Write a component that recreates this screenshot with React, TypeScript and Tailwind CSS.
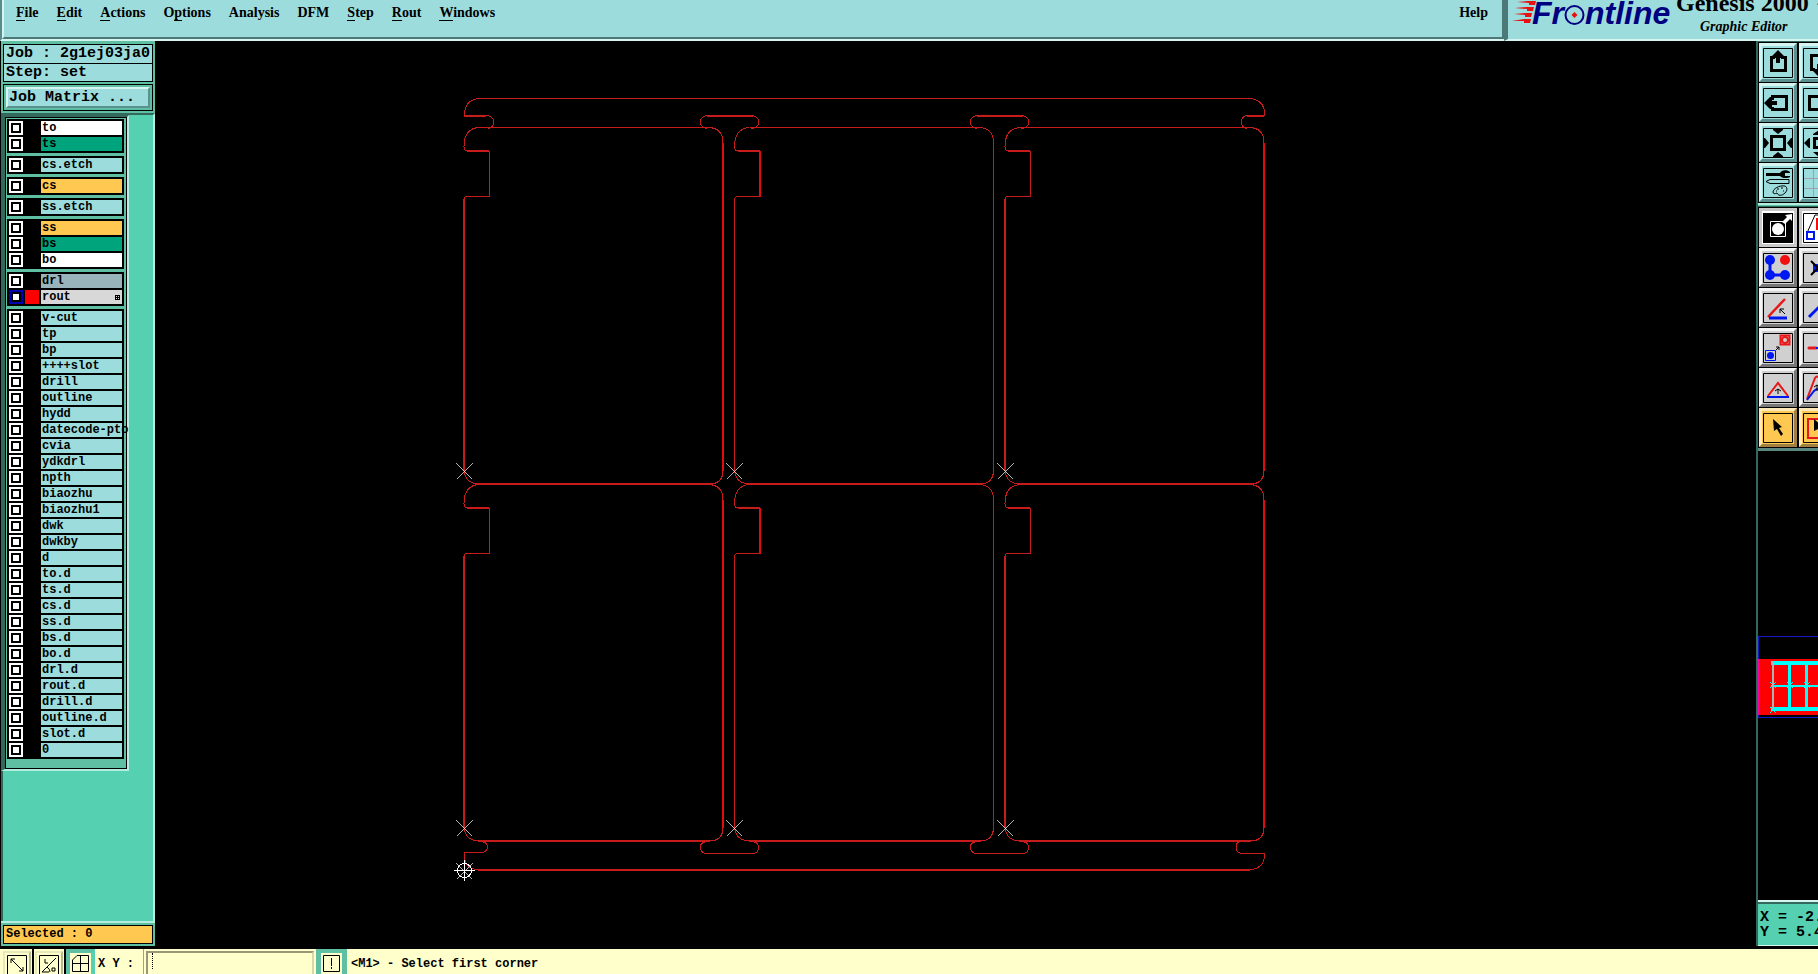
import type { ReactNode } from "react";
import clsx from "clsx";

type LayerTone = "white" | "green" | "aqua" | "gold" | "slate" | "gray";

interface Layer {
  name: string;
  tone: LayerTone;
  active?: boolean;
}

const TONE_CLASS: Record<LayerTone, string> = {
  white: "bg-white",
  green: "bg-[#00a47c]",
  aqua: "bg-[#9cdcdc]",
  gold: "bg-[#ffc850]",
  slate: "bg-[#9ab4bc]",
  gray: "bg-[#d8d8d8]",
};

const aqua = (...names: string[]): Layer[] =>
  names.map((name) => ({ name, tone: "aqua" }));

const LAYER_GROUPS: Layer[][] = [
  [
    { name: "to", tone: "white" },
    { name: "ts", tone: "green" },
  ],
  aqua("cs.etch"),
  [{ name: "cs", tone: "gold" }],
  aqua("ss.etch"),
  [
    { name: "ss", tone: "gold" },
    { name: "bs", tone: "green" },
    { name: "bo", tone: "white" },
  ],
  [
    { name: "drl", tone: "slate" },
    { name: "rout", tone: "gray", active: true },
  ],
  aqua(
    "v-cut", "tp", "bp", "++++slot", "drill", "outline", "hydd",
    "datecode-pto", "cvia", "ydkdrl", "npth", "biaozhu", "biaozhu1",
    "dwk", "dwkby", "d", "to.d", "ts.d", "cs.d", "ss.d", "bs.d", "bo.d",
    "drl.d", "rout.d", "drill.d", "outline.d", "slot.d", "0",
  ),
];

// [label, index of the underlined letter]
const MENUS: [string, number][] = [
  ["File", 0],
  ["Edit", 0],
  ["Actions", 0],
  ["Options", 1],
  ["Analysis", -1],
  ["DFM", -1],
  ["Step", 0],
  ["Rout", 0],
  ["Windows", 0],
];

function MenuItem({ label, mark }: { label: string; mark: number }) {
  return (
    <button type="button" className="cursor-pointer">
      {mark < 0 ? (
        label
      ) : (
        <>
          {label.slice(0, mark)}
          <span className="border-b border-black">{label[mark]}</span>
          {label.slice(mark + 1)}
        </>
      )}
    </button>
  );
}

function Header() {
  return (
    <header className="flex h-[41px] shrink-0 overflow-hidden bg-[#9cdcdc] font-['Liberation_Serif',serif] font-bold">
      <div className="flex min-w-0 flex-1 border-b-2 border-l-2 border-b-[#d6f4f0] border-l-[#5a8c8c]">
        <nav className="flex flex-1 items-start gap-[18px] border-r-2 border-b-2 border-l-2 border-r-[#4c7878] border-b-[#4c7878] border-l-[#d6f4f0] pr-[14px] pl-3 text-sm leading-[18px] pt-1">
          {MENUS.map(([label, mark]) => (
            <MenuItem key={label} label={label} mark={mark} />
          ))}
          <button type="button" className="ml-auto cursor-pointer">
            Help
          </button>
        </nav>
      </div>
      <div className="flex w-[314px] shrink-0 border-b-2 border-l-4 border-b-[#d6f4f0] border-l-[#4c7878]">
        <div className="flex w-[168px] shrink-0 items-start pl-1 font-['Liberation_Sans',sans-serif] text-[32px] leading-[26px] text-[#000080] italic">
          <svg className="-mr-1 h-6 w-6 shrink-0" viewBox="0 0 24 24">
            <path
              fill="#e81010"
              d="m5 2 11-1h8l-1 4h-6v-2ZM3 8l11-1h8l-1 4h-6v-2ZM2 14l11-1h7l-1 4h-6v-2ZM0 21l12-2h7l-1 4h-6v-2Z"
            />
          </svg>
          <span>Fr</span>
          <svg className="mt-[5px] h-5 w-[21px] shrink-0" viewBox="0 0 20 20">
            <circle cx="10" cy="10" r="9" fill="none" stroke="#000080" strokeWidth="2" />
            <path fill="#e81010" d="m10 7 3 3-3 3-3-3Z" />
          </svg>
          <span>ntline</span>
        </div>
        <div className="-mt-[11px] flex flex-1 flex-col whitespace-nowrap">
          <span className="text-2xl leading-[28px]">Genesis 2000 ™</span>
          <span className="pl-6 text-sm leading-5 italic">
            Graphic Editor
          </span>
        </div>
      </div>
    </header>
  );
}

function LayerRow({ layer }: { layer: Layer }) {
  return (
    <label className="flex h-[14px] gap-[2px]">
      <input
        type="checkbox"
        defaultChecked={layer.active}
        className={clsx(
          "h-[14px] w-[14px] shrink-0 appearance-none border-2 bg-white shadow-[inset_0_0_0_2px_#000]",
          layer.active ? "border-[#0000b0]" : "border-white",
        )}
      />
      <span
        className={clsx("w-[14px] shrink-0", layer.active ? "bg-[#ff0000]" : "bg-black")}
      />
      <span
        className={clsx(
          "flex w-[81px] items-center pl-px text-xs leading-[14px] whitespace-nowrap",
          TONE_CLASS[layer.tone],
        )}
      >
        {layer.name}
        {layer.active && (
          <svg className="mr-[2px] ml-auto h-[5px] w-[5px]" viewBox="0 0 5 5" shapeRendering="crispEdges">
            <path d="M.5.5h4v4h-4ZM2.5 0v5M0 2.5h5" fill="none" stroke="#000" />
          </svg>
        )}
      </span>
    </label>
  );
}

function Sidebar() {
  return (
    <aside className="mb-[2px] ml-px flex w-[154px] shrink-0 flex-col bg-[#5fbfa3] text-black">
      <div className="m-[2px] mt-[3px] border border-black bg-[#9cdcdc] text-[15px]">
        <div className="h-[19px] border-b border-black pl-[2px] leading-[18px] whitespace-nowrap">
          Job : 2g1ej03ja0
        </div>
        <div className="h-[17px] pl-[2px] leading-[18px]">Step: set</div>
      </div>
      <div className="mx-[2px] mb-[2px] border border-black p-[2px]">
        <button
          type="button"
          className="block h-[21px] w-full cursor-pointer border-2 border-t-[#d6f4f0] border-r-[#5a9090] border-b-[#5a9090] border-l-[#d6f4f0] bg-[#9cdcdc] pl-px text-left text-[15px] leading-[18px]"
        >
          Job Matrix ...
        </button>
      </div>
      <div className="flex flex-1 flex-col border-t-2 border-r-2 border-b-2 border-t-[#33695c] border-r-[#b5eee0] border-b-[#b5eee0] bg-[#55d0b0]">
        <div className="w-[128px] border-t-2 border-r-2 border-b-2 border-l-4 border-t-[#33695c] border-r-[#b5eee0] border-b-[#b5eee0] border-l-[#33695c]">
          <div className="flex flex-col gap-[3px] border border-black bg-[#5fbfa3] p-px pb-[9px]">
            {LAYER_GROUPS.map((group) => (
              <div key={group[0].name} className="flex w-[117px] flex-col gap-[2px] bg-black p-[2px]">
                {group.map((layer) => (
                  <LayerRow key={layer.name} layer={layer} />
                ))}
              </div>
            ))}
          </div>
        </div>
        <div className="w-[2px] flex-1 bg-[#33695c]" />
      </div>
      <div className="m-[2px] h-[19px] border border-black bg-[#ffc850] pl-[2px] text-xs leading-[17px]">
        Selected : 0
      </div>
    </aside>
  );
}

const RED = "#c81c1c";
const BRIGHT = "#e00c10";

const COLUMNS = [
  { x: 464, left: 2, notch: 1, right: 2 },
  { x: 734.5, left: 1, notch: 2, right: 1 },
  { x: 1005, left: 2, notch: 1, right: 2 },
];
const ROWS = [127.5, 484.5];

function Board({ x, y, left, notch, right }: { x: number; y: number; left: number; notch: number; right: number }) {
  const r = x + 259;
  const b = y + 356.5;
  return (
    <g>
      <path
        d={`M${x + 15} ${y}H${r - 14}Q${r} ${y + 1} ${r} ${y + 15}M${r} ${b - 14}Q${r} ${b} ${r - 14} ${b}M${x + 14} ${b}Q${x + 1} ${b - 1} ${x} ${b - 14}M${x + 3} ${y + 69}Q${x} ${y + 69} ${x} ${y + 72}M${x + 3} ${y + 23.5}Q${x} ${y + 23} ${x} ${y + 19}Q${x} ${y + 1} ${x + 15} ${y}M${x + 25} ${y + 69}H${x + 3}`}
      />
      <path d={`M${x} ${y + 71}V${b - 13}`} strokeWidth={left} />
      <path d={`M${x + 3} ${y + 23.5}H${x + 25}`} strokeWidth={2} />
      <path
        d={`M${x + 25} ${y + 23.5}V${y + 69}`}
        strokeWidth={notch}
        stroke={notch > 1 ? BRIGHT : RED}
      />
      <path d={`M${r} ${y + 15}V${b - 13}`} strokeWidth={right} stroke={BRIGHT} />
      <path d={`M${x + 14} ${b}H${r - 13}`} strokeWidth={2} />
    </g>
  );
}

function Canvas() {
  return (
    <main className="min-w-0 flex-1">
      <svg className="h-full w-full" viewBox="155 41 1601 907" shapeRendering="crispEdges">
        <g fill="none" stroke={RED}>
          {/* top rail */}
          <path d="M488 128.5Q493.5 128 493.5 122Q493.5 116 486 115.5H464.5V113Q466 99 480 98.5H1250Q1264 100 1264.5 113V115.5H1247Q1241.5 116 1241.5 122Q1241.5 128 1247 128.5" />
          <path d="M464 116H486M1247 116H1264" strokeWidth="2" />
          {/* bottom rail */}
          <path d="M483 842Q487.5 843 487.5 847Q487.5 852 481 852.5H464.5V858Q466 869 479 870M1250 870Q1264 868 1264.5 856V853.5H1242Q1236 853 1236 847Q1236 842 1241 841" />
          <path d="M478 870H1250" strokeWidth="2" />
          {[700.5, 970.5].map((x) => (
            <g key={x}>
              <path d={`M${x + 7} 128.5Q${x} 128 ${x} 122Q${x} 116 ${x + 7} 115.5M${x + 51} 115.5Q${x + 58} 116 ${x + 58} 122Q${x + 58} 128 ${x + 51} 128.5`} />
              <path d={`M${x + 6} 116H${x + 52}`} strokeWidth="2" />
              <path d={`M${x + 7} 841.5Q${x} 842 ${x} 847Q${x} 853 ${x + 6} 853.5H${x + 53}Q${x + 58} 853 ${x + 58} 847Q${x + 58} 842 ${x + 51} 841.5`} />
            </g>
          ))}
          {ROWS.map((y) =>
            COLUMNS.map((col) => <Board key={`${col.x}-${y}`} y={y} {...col} />),
          )}
        </g>
        <g fill="none" stroke="#fff">
          {[470.5, 827.5].map((y) =>
            [464.5, 734.5, 1005.5].map((x) => (
              <path
                key={`${x}-${y}`}
                d={`M${x - 8} ${y - 8}l16 16m0 -16l-16 16`}
                strokeWidth="0.7"
              />
            )),
          )}
          <path d="M456.500 862.500l16 16m0-16l-16 16" strokeWidth="0.7" />
          <path d="M464.5 860v21M454 870.5h21" />
          <circle cx="464.5" cy="870.5" r="7" />
        </g>
      </svg>
    </main>
  );
}

type ToolTone = "aqua" | "white" | "gray" | "gold";

const TOOL_CLASS: Record<ToolTone, string> = {
  aqua: "bg-[#9cdcdc] border-t-[#d6f4f0] border-l-[#d6f4f0] border-r-[#5a9090] border-b-[#5a9090]",
  white: "bg-white border-[#c8c8c8]",
  gray: "bg-[#d0d0d0] border-t-[#f4f4f4] border-l-[#f4f4f4] border-r-[#787878] border-b-[#787878]",
  gold: "bg-[#ffc850] border-t-[#ffe9b8] border-l-[#ffe9b8] border-r-[#a08040] border-b-[#a08040]",
};

interface Tool {
  label: string;
  tone: ToolTone;
  art: ReactNode;
}

const BLUE = "#0018f0";

const VIEW_TOOLS: Tool[] = [
  {
    label: "Pan up",
    tone: "aqua",
    art: <><path d="M12 9.500H8.500v13h14v-13H18" stroke="#000" strokeWidth="3" fill="none" /><path d="m15 2 6 6v2h-4v5h-4v-5H9V8Z" /></>,
  },
  {
    label: "Pan down",
    tone: "aqua",
    art: <><path d="M12 21.500H8.500v-14h14v14H20" stroke="#000" strokeWidth="3" fill="none" /><path d="m16 29 6-6v-2h-4v-5h-4v5h-4v2Z" /></>,
  },
  {
    label: "Pan left",
    tone: "aqua",
    art: <><path d="M9.500 12V8.500h14v13h-14V19" stroke="#000" strokeWidth="3" fill="none" /><path d="m1 15 6-6h2v4h5v4H9v4H7Z" /></>,
  },
  {
    label: "Pan right",
    tone: "aqua",
    art: <><path d="M20.500 12V8.500h-14v13h14V19" stroke="#000" strokeWidth="3" fill="none" /><path d="m29 15-6-6h-2v4h-5v4h5v4h2Z" /></>,
  },
  {
    label: "Zoom home",
    tone: "aqua",
    art: <><path d="M8.500 8.500h13v13h-13Z" stroke="#000" strokeWidth="3" fill="none" /><path d="M10 1h10v1l-5 4-5-4ZM10 29h10v-1l-5-4-5 4ZM1 10v10h1l4-5-4-5ZM29 10v10h-1l-4-5 4-5Z" /></>,
  },
  {
    label: "Zoom out",
    tone: "aqua",
    art: <><path d="M11.500 10.500h10v9h-10Z" stroke="#000" strokeWidth="3" fill="none" /><path d="m10 6 6-4 6 4v1H10ZM10 24h12l-6 5ZM7 10v10H6l-5-5 5-5ZM24 10v10l5-5Z" /></>,
  },
  {
    label: "Setup",
    tone: "aqua",
    art: (
      <>
        <path d="M3 5h14c1-3 7-4 10-1v1h-5v3h5v1c-3 2-9 1-10-1H3Z" />
        <path d="m3 13.500 4-2h19v4H7Z" stroke="#000" fill="none" />
        <path d="M22 18c-6-1-12 3-12 6 0 2 2 2 4 1 1 3 5 3 8 0s2-6 0-7Z" stroke="#000" fill="none" />
        <path d="M14 21h2M18 20h2M20 23h1M13 23h1" stroke="#000" />
      </>
    ),
  },
  {
    label: "Grid",
    tone: "aqua",
    art: <path d="M10.5 1v28M20.500 1v28M1 10.500h28M1 20.500h28" stroke="#a0a0b0" fill="none" />,
  },
];

const EDIT_TOOLS: Tool[] = [
  {
    label: "Feature info",
    tone: "white",
    art: (
      <>
        <path d="M0 0h30v30H0Z" />
        <path d="M7.500 8.500h15v15h-15Z" stroke="#fff" fill="none" />
        <circle cx="15" cy="16" r="6" fill="#fff" />
        <path d="m19 9 5-5-2-2 7-1v7l-2-2-5 5Z" fill="#fff" />
      </>
    ),
  },
  {
    label: "Measure",
    tone: "white",
    art: <><path d="m4 20 8-18h10" stroke="#000" fill="none" /><path d="M13 5h12v12H13Z" fill="#f01010" /><path d="M4 19h7v7H4Z" stroke={BLUE} strokeWidth="2" fill="none" /></>,
  },
  {
    label: "Net select",
    tone: "gray",
    art: <><path d="M7 8v14h14" stroke={BLUE} strokeWidth="3" fill="none" /><g fill={BLUE}><circle cx="7" cy="7" r="5" /><circle cx="7" cy="22" r="5" /><circle cx="22" cy="22" r="5" /></g><circle cx="22" cy="7" r="5" fill="#f01010" /></>,
  },
  {
    label: "Delete",
    tone: "gray",
    art: <><path d="M10 15h18" stroke={BLUE} strokeWidth="8" /><path d="m8 8 14 14M8 22 22 8" stroke="#000" strokeWidth="2" /></>,
  },
  {
    label: "Change angle",
    tone: "gray",
    art: <><path d="M5 24 22 6" stroke="#e81818" strokeWidth="2.500" /><path d="M6 25h18" stroke={BLUE} strokeWidth="3" /><path d="m22 21-5-5m0 4v-4h4" stroke="#000" fill="none" /></>,
  },
  {
    label: "Extend line",
    tone: "gray",
    art: <path d="M6 24 24 6" stroke={BLUE} strokeWidth="3" />,
  },
  {
    label: "Copy feature",
    tone: "gray",
    art: <><path d="M17.500 2.500h9v9h-9Z" stroke="#e81818" strokeWidth="2" fill="none" /><circle cx="22" cy="7" r="3" stroke="#e81818" strokeWidth="2" fill="none" /><path d="M2.500 17.500h10v10h-10Z" stroke={BLUE} fill="none" /><circle cx="7.500" cy="22.500" r="3.500" fill={BLUE} /><path d="m13 17 3-3m-3 0h3v3" stroke="#000" fill="none" /></>,
  },
  {
    label: "Split line",
    tone: "gray",
    art: <><path d="M6 15h7" stroke="#e81818" strokeWidth="3" strokeLinecap="round" /><path d="M13 15h13" stroke={BLUE} strokeWidth="2" /></>,
  },
  {
    label: "Move triangle",
    tone: "gray",
    art: <><path d="M5 23 15 10l10 13" stroke="#e81818" strokeWidth="2" fill="none" /><path d="M4 24h22" stroke={BLUE} strokeWidth="2" /><path d="M15 21v-5m-3 2 3-2 3 2" stroke="#000" fill="none" /></>,
  },
  {
    label: "Move arc",
    tone: "gray",
    art: <><path d="m4 26 8-21q2-3 4 0l10 22" stroke="#e81818" strokeWidth="2" fill="none" /><path d="m4 27 7-9q4-4 8 0l8 9" stroke={BLUE} strokeWidth="2" fill="none" /><path d="M14 18v-6m-3 2 3-2 3 2" stroke="#000" fill="none" /></>,
  },
  {
    label: "Select",
    tone: "gold",
    art: <path d="m10 6 9 8-3 1 4 6-2 2-4-7-3 2Z" />,
  },
  {
    label: "Frame select",
    tone: "gold",
    art: <><path d="M5 6h20v19H5Z" stroke="#e81818" strokeWidth="2" fill="none" /><path d="m11 6 9 8-3 1 4 6-2 2-4-7-4 2Z" /></>,
  },
];

function ToolGrid({ tools }: { tools: Tool[] }) {
  return (
    <div className="grid grid-cols-[38px_38px] gap-x-[2px] gap-y-px bg-black py-px pl-px">
      {tools.map((tool) => (
        <button
          key={tool.label}
          type="button"
          aria-label={tool.label}
          className={clsx("flex h-[39px] w-[38px] cursor-pointer items-end border-[3px] p-px", TOOL_CLASS[tool.tone])}
        >
          <svg className="h-[30px] w-[30px]" viewBox="0 0 30 30">
            {tool.art}
            <path d="M.5.5h29v29H.5Z" fill="none" stroke="#000" />
          </svg>
        </button>
      ))}
    </div>
  );
}

function Toolbox() {
  return (
    <aside className="mb-[2px] flex w-[62px] shrink-0 flex-col overflow-hidden border-l-2 border-[#33695c]">
      <div className="border-t border-[#33695c]">
        <ToolGrid tools={VIEW_TOOLS} />
      </div>
      <div className="h-1 shrink-0 border-t-2 border-b border-t-[#b5eee0] border-b-[#33695c] bg-[#5fbfa3]" />
      <ToolGrid tools={EDIT_TOOLS} />
      <div className="h-[3px] shrink-0 bg-[#5a8880]" />
      <div className="flex-1 pt-[185px]">
        <svg className="block h-[83px] w-[60px]" viewBox="0 0 60 83" shapeRendering="crispEdges">
          <path d="M.5.5h70v81H.5Z" fill="none" stroke="#1818c8" />
          <path d="M0 23h60v56H0Z" fill="#f00" />
          <path d="M.5 23v56" stroke="#f0a" />
          <g fill="none" stroke="#0ff">
            <path d="M13 27h47" strokeWidth="4" />
            <path d="M13 50h47" strokeWidth="2" />
            <path d="M13 73h47" strokeWidth="4" />
            <path d="M31 26v48M48 26v48" strokeWidth="3" />
            <path d="m12 46 6 6m0-6-6 6m17-6 6 6m0-6-6 6m17-6 6 6m0-6-6 6M12 71l6 6m0-6-6 6" />
          </g>
          <path d="M15 25v48" stroke="#b0b0b0" strokeWidth="2" />
        </svg>
      </div>
      <div className="h-[46px] shrink-0 border-t-2 border-b border-[#d6f4f0] bg-[#55d0b0] text-[15px] leading-[15px]">
        <div className="border-t-2 border-[#33695c] pt-[6px] pl-[2px] whitespace-pre">
          {"X = -2.4\nY = 5.41"}
        </div>
      </div>
    </aside>
  );
}

function StatusBar() {
  return (
    <footer className="flex h-[26px] shrink-0 items-start overflow-hidden border-t border-black bg-[#ffffcc] pl-px text-xs text-black">
      <button
        type="button"
        aria-label="Line snap"
        className="flex h-8 w-[33px] shrink-0 cursor-pointer justify-center border-r-2 border-black pt-[2px]"
      >
        <span className="border-2 border-[#b8b890] border-t-[#e8e8b8] border-l-[#e8e8b8] p-[2px]">
          <svg className="h-5 w-5" viewBox="0 0 20 20">
            <path d="M.5.5h19v19H.5ZM4 4l12 12M4 8V4h4M12 16h4v-4" fill="none" stroke="#000" />
          </svg>
        </span>
      </button>
      <button
        type="button"
        aria-label="Angle snap"
        className="flex h-8 w-8 shrink-0 cursor-pointer justify-center border-r-2 border-black pt-[2px]"
      >
        <span className="border-2 border-[#b8b890] border-t-[#e8e8b8] border-l-[#e8e8b8] p-[2px]">
          <svg className="h-5 w-5" viewBox="0 0 20 20">
            <path d="M.5.5h19v19H.5ZM3 17 17 3M3 17h7M6 4v4h3M8 12q3 2 3 5M13 13h3v3h-3Z" fill="none" stroke="#000" />
          </svg>
        </span>
      </button>
      <button
        type="button"
        aria-label="Grid snap"
        className="flex h-8 w-[29px] shrink-0 cursor-pointer justify-center border-4 border-[#5fbfa3] border-r-[#55d0b0]"
      >
        <svg className="mt-[2px] h-[17px] w-[17px]" viewBox="0 0 17 17">
          <path d="M5 .5h11.500v16H.5V5ZM8.500 1v15M1 8.500h15" fill="none" stroke="#000" />
        </svg>
      </button>
      <label htmlFor="xy" className="w-12 shrink-0 pl-[3px] leading-[30px] whitespace-pre">
        X Y :
      </label>
      <div className="relative h-8 w-[174px] shrink-0 border-x border-[#5fbfa3] px-[2px] pt-[2px]">
        <input
          id="xy"
          type="text"
          className="h-8 w-full border-2 border-[#989878] border-r-[#d8d8a8] bg-[#ffffcc] px-1 outline-none"
        />
        <span className="absolute top-1 left-2 h-4 border-l border-dotted border-black" />
      </div>
      <button
        type="button"
        aria-label="Alert"
        className="flex h-8 w-[29px] shrink-0 cursor-pointer justify-center border-4 border-[#5fbfa3]"
      >
        <svg className="mt-[2px] h-[17px] w-[17px]" viewBox="0 0 17 17">
          <path d="M.5.5h16v16H.5ZM8.500 3v8M8.500 12v2" fill="none" stroke="#000" />
        </svg>
      </button>
      <p className="border-l border-[#5fbfa3] pl-1 leading-[30px]">&lt;M1&gt; - Select first corner</p>
    </footer>
  );
}

export default function App() {
  return (
    <div className="flex h-screen flex-col overflow-hidden bg-black font-['Liberation_Mono',monospace] font-bold">
      <Header />
      <div className="flex min-h-0 flex-1">
        <Sidebar />
        <Canvas />
        <Toolbox />
      </div>
      <StatusBar />
    </div>
  );
}
